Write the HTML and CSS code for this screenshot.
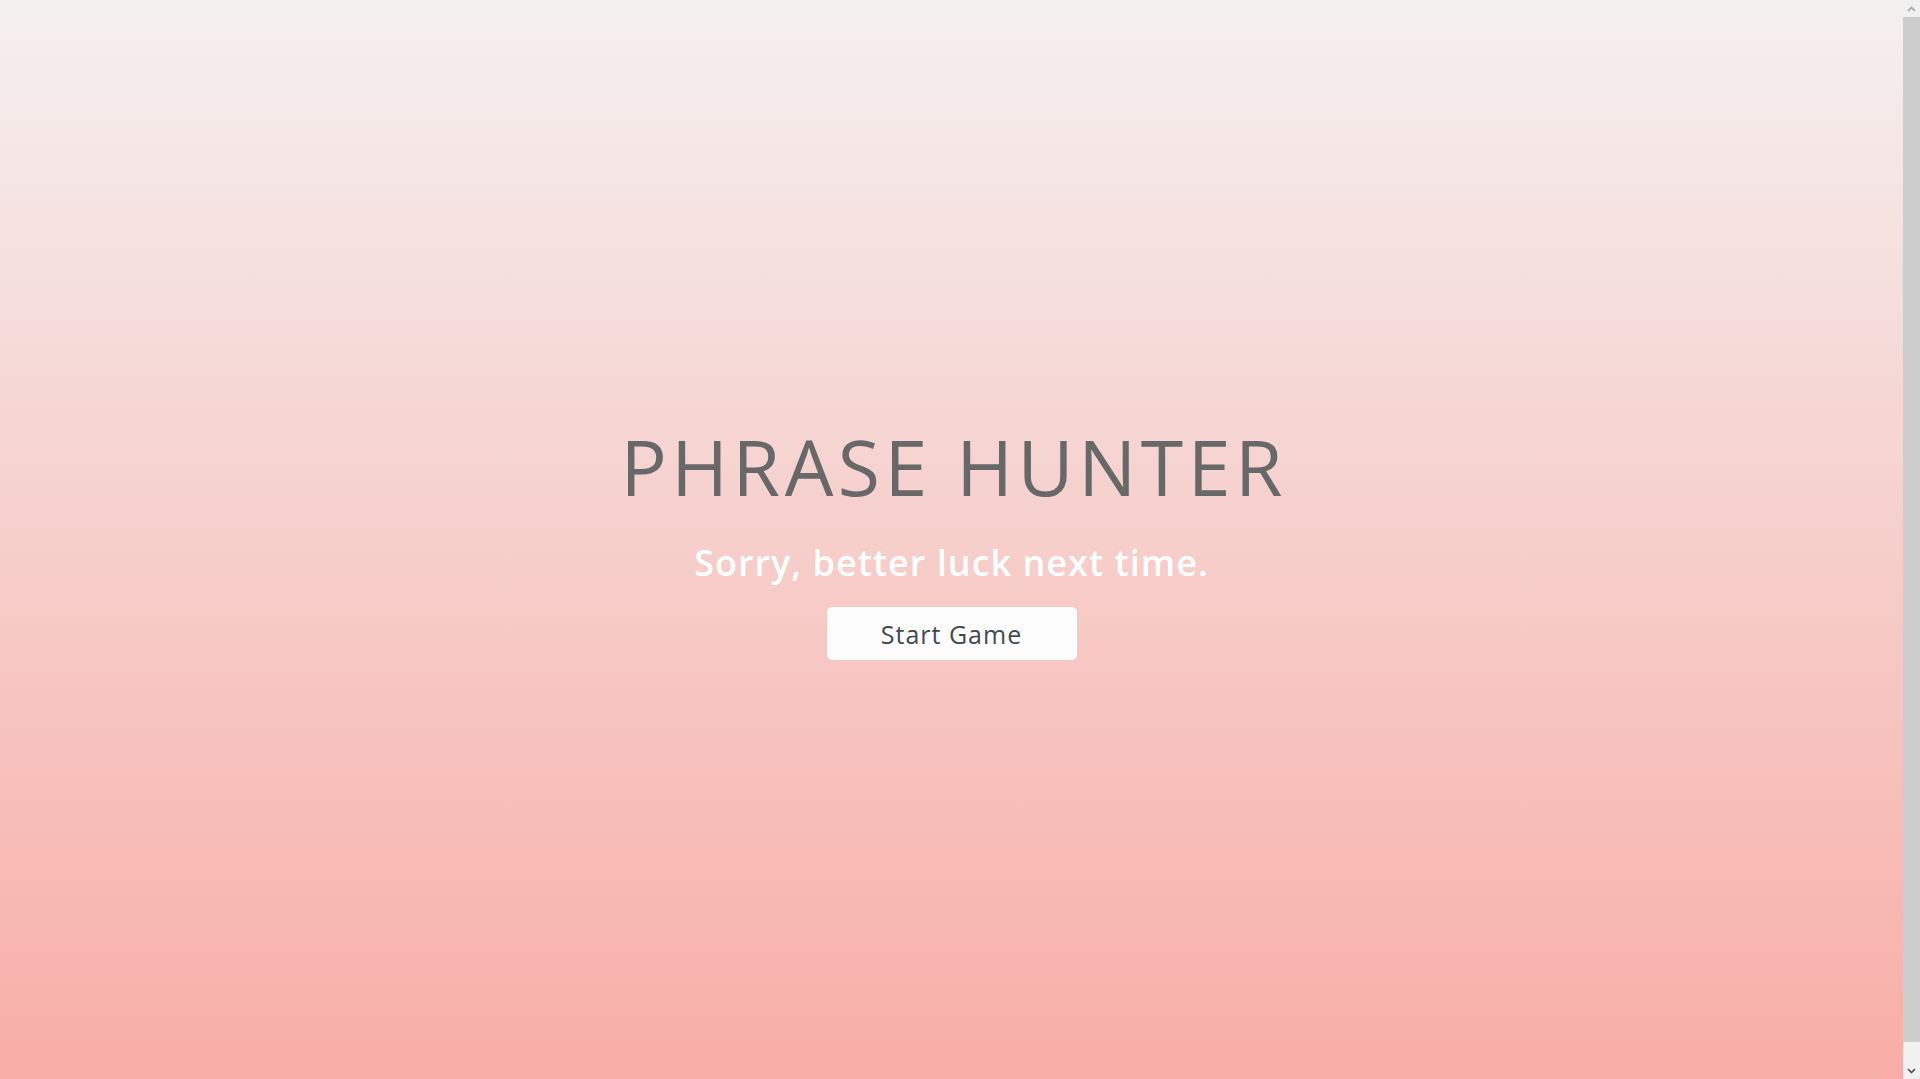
FILE: index.html
```html
<!DOCTYPE html>
<html lang="en">
<head>
<meta charset="utf-8">
<title>Phrase Hunter</title>
<link rel="stylesheet" href="styles.css">
</head>
<body>
<main class="overlay lose">
  <h1 class="title">PHRASE HUNTER</h1>
  <h2 class="game-over-message">Sorry, better luck next time.</h2>
  <button class="btn-reset">Start Game</button>
</main>
<aside class="scrollbar" aria-hidden="true">
  <span class="sb-btn sb-up">
    <svg width="9" height="6" viewBox="0 0 9 6"><path d="M1 5 L4.5 1.5 L8 5" fill="none" stroke="#a3a3a3" stroke-width="1.6"/></svg>
  </span>
  <span class="sb-track"><span class="sb-thumb"></span></span>
  <span class="sb-btn sb-down">
    <svg width="9" height="6" viewBox="0 0 9 6"><path d="M1 1 L4.5 4.5 L8 1" fill="none" stroke="#505050" stroke-width="1.6"/></svg>
  </span>
</aside>
</body>
</html>
```

FILE: styles.css
```css
html, body {
  margin: 0;
  padding: 0;
}

body {
  display: flex;
  align-items: flex-start;
  font-family: "Open Sans", "Liberation Sans", sans-serif;
}

.overlay {
  flex: 1;
  min-height: 100vh;
  padding: 11px 0;
  display: flex;
  flex-direction: column;
  align-items: center;
  justify-content: center;
  background: linear-gradient(to bottom, #f4f0f0 0%, #f8aca5 100%);
}

.title {
  margin: 0;
  font-size: 77px;
  line-height: 80px;
  font-weight: 400;
  letter-spacing: 4.5px;
  text-indent: 4.5px;
  color: #686868;
}

.game-over-message {
  margin: 34px 0 0;
  font-size: 36px;
  line-height: 44px;
  font-weight: 600;
  letter-spacing: 1px;
  color: #ffffff;
}

.btn-reset {
  margin: 22px 0 14px;
  width: 250px;
  height: 53px;
  border: none;
  border-radius: 5px;
  background: #fdfcfd;
  color: #3d4b55;
  font-family: "Open Sans", "Liberation Sans", sans-serif;
  font-size: 25px;
  letter-spacing: 1px;
  cursor: pointer;
}

/* classic browser scrollbar, as in the capture */
.scrollbar {
  flex: 0 0 17px;
  height: 100vh;
  position: sticky;
  top: 0;
  display: flex;
  flex-direction: column;
  background: #f1f1f1;
}

.sb-btn {
  flex: 0 0 17px;
  display: flex;
  align-items: center;
  justify-content: center;
}

.sb-track {
  flex: 1;
  display: flex;
  flex-direction: column;
  padding-bottom: 20px;
}

.sb-thumb {
  flex: 1;
  background: #cdcdcd;
}
```
